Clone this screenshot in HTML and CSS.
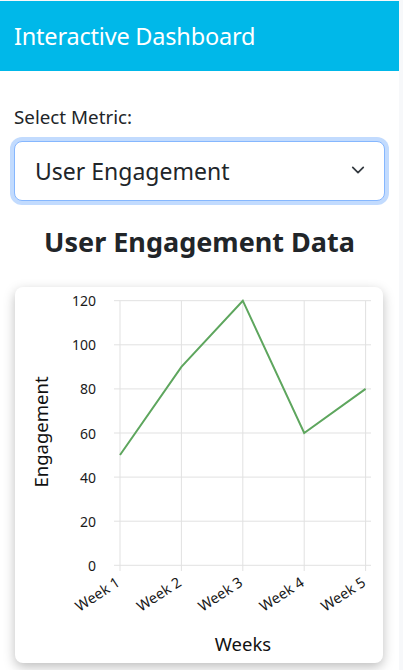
FILE: index.html
```html
<!DOCTYPE html>
<html lang="en">
<head>
<meta charset="utf-8">
<title>Interactive Dashboard</title>
<link rel="stylesheet" href="styles.css">
</head>
<body>
<div class="page">
  <header class="topbar">
    <h1 class="brand">Interactive Dashboard</h1>
  </header>
  <main class="content">
    <label class="field-label" for="metric">Select Metric:</label>
    <div class="select-wrap">
      <select id="metric" class="metric-select">
        <option>User Engagement</option>
        <option>Sales</option>
        <option>Revenue</option>
      </select>
      <svg class="chevron" width="16" height="16" viewBox="0 0 16 16" aria-hidden="true">
        <path d="M2 5l6 6 6-6" fill="none" stroke="#343a40" stroke-width="2" stroke-linecap="round" stroke-linejoin="round"/>
      </svg>
    </div>
    <h2 class="chart-title">User Engagement Data</h2>
    <section class="chart-card">
      <svg class="chart" width="368" height="376" viewBox="0 0 368 376">
        <g stroke="#e1e1e1" stroke-width="1">
          <line x1="99" y1="13.7" x2="356" y2="13.7"/>
          <line x1="99" y1="57.8" x2="356" y2="57.8"/>
          <line x1="99" y1="101.9" x2="356" y2="101.9"/>
          <line x1="99" y1="146" x2="356" y2="146"/>
          <line x1="99" y1="190.1" x2="356" y2="190.1"/>
          <line x1="99" y1="234.2" x2="356" y2="234.2"/>
          <line x1="99" y1="278.3" x2="356" y2="278.3"/>
          <line x1="105" y1="13.7" x2="105" y2="284"/>
          <line x1="166.4" y1="13.7" x2="166.4" y2="284"/>
          <line x1="227.8" y1="13.7" x2="227.8" y2="284"/>
          <line x1="289.2" y1="13.7" x2="289.2" y2="284"/>
          <line x1="350.6" y1="13.7" x2="350.6" y2="284"/>
        </g>
        <g class="tick" text-anchor="end" dominant-baseline="central">
          <text x="81" y="13.7">120</text>
          <text x="81" y="57.8">100</text>
          <text x="81" y="101.9">80</text>
          <text x="81" y="146">60</text>
          <text x="81" y="190.1">40</text>
          <text x="81" y="234.2">20</text>
          <text x="81" y="278.3">0</text>
        </g>
        <g class="tick xtick" text-anchor="end">
          <text transform="translate(106 298) rotate(-33)">Week 1</text>
          <text transform="translate(167.4 298) rotate(-33)">Week 2</text>
          <text transform="translate(228.8 298) rotate(-33)">Week 3</text>
          <text transform="translate(290.2 298) rotate(-33)">Week 4</text>
          <text transform="translate(351.6 298) rotate(-33)">Week 5</text>
        </g>
        <polyline points="105,168.05 166.4,79.85 227.8,13.7 289.2,146 350.6,101.9" fill="none" stroke="#5ea65e" stroke-width="2" stroke-linejoin="miter"/>
        <text class="axis-title" transform="translate(25 145) rotate(-90)" text-anchor="middle" dominant-baseline="central">Engagement</text>
        <text class="axis-title" x="228" y="356" text-anchor="middle" dominant-baseline="central">Weeks</text>
      </svg>
    </section>
  </main>
</div>
</body>
</html>
```

FILE: styles.css
```css
html, body {
  margin: 0;
  padding: 0;
}
body {
  background: #f7f8fa;
  font-family: "Noto Sans", "Open Sans", "Liberation Sans", sans-serif;
  color: #212529;
}
.page {
  margin-top: 1px;
  margin-right: 4px;
  background: #ffffff;
  min-height: 669px;
}
.topbar {
  background: #00b8e9;
  height: 70px;
  display: flex;
  align-items: center;
  padding: 0 14px;
}
.brand {
  margin: 0;
  font-size: 23.5px;
  font-weight: 400;
  color: #ffffff;
  letter-spacing: -0.2px;
}
.content {
  padding: 34px 14px 0;
  display: flex;
  flex-direction: column;
}
.field-label {
  font-size: 18.8px;
  line-height: 24px;
  margin-bottom: 12px;
}
.select-wrap {
  position: relative;
}
.metric-select {
  -webkit-appearance: none;
  appearance: none;
  width: 100%;
  height: 60px;
  box-sizing: border-box;
  padding: 0 48px 0 20px;
  font-family: inherit;
  font-size: 23px;
  color: #212529;
  background: #ffffff;
  border: 1px solid #86b7fe;
  border-radius: 8px;
  box-shadow: 0 0 0 4px rgba(13, 110, 253, 0.25);
  outline: none;
}
.chevron {
  position: absolute;
  right: 20px;
  top: 22px;
  width: 14px;
  height: 14px;
  pointer-events: none;
}
.chart-title {
  margin: 24px 0 28px;
  text-align: center;
  font-size: 27px;
  line-height: 34px;
  font-weight: 700;
}
.chart-card {
  margin: 0 2px 0 1px;
  height: 376px;
  background: #ffffff;
  border-radius: 8px;
  box-shadow: 0 4px 12px rgba(0, 0, 0, 0.26);
  overflow: hidden;
}
.chart {
  display: block;
}
.tick {
  font-size: 14px;
  fill: #1a1a1a;
}
.xtick {
  font-size: 14.5px;
}
.axis-title {
  font-size: 18.5px;
  fill: #111111;
}
```
